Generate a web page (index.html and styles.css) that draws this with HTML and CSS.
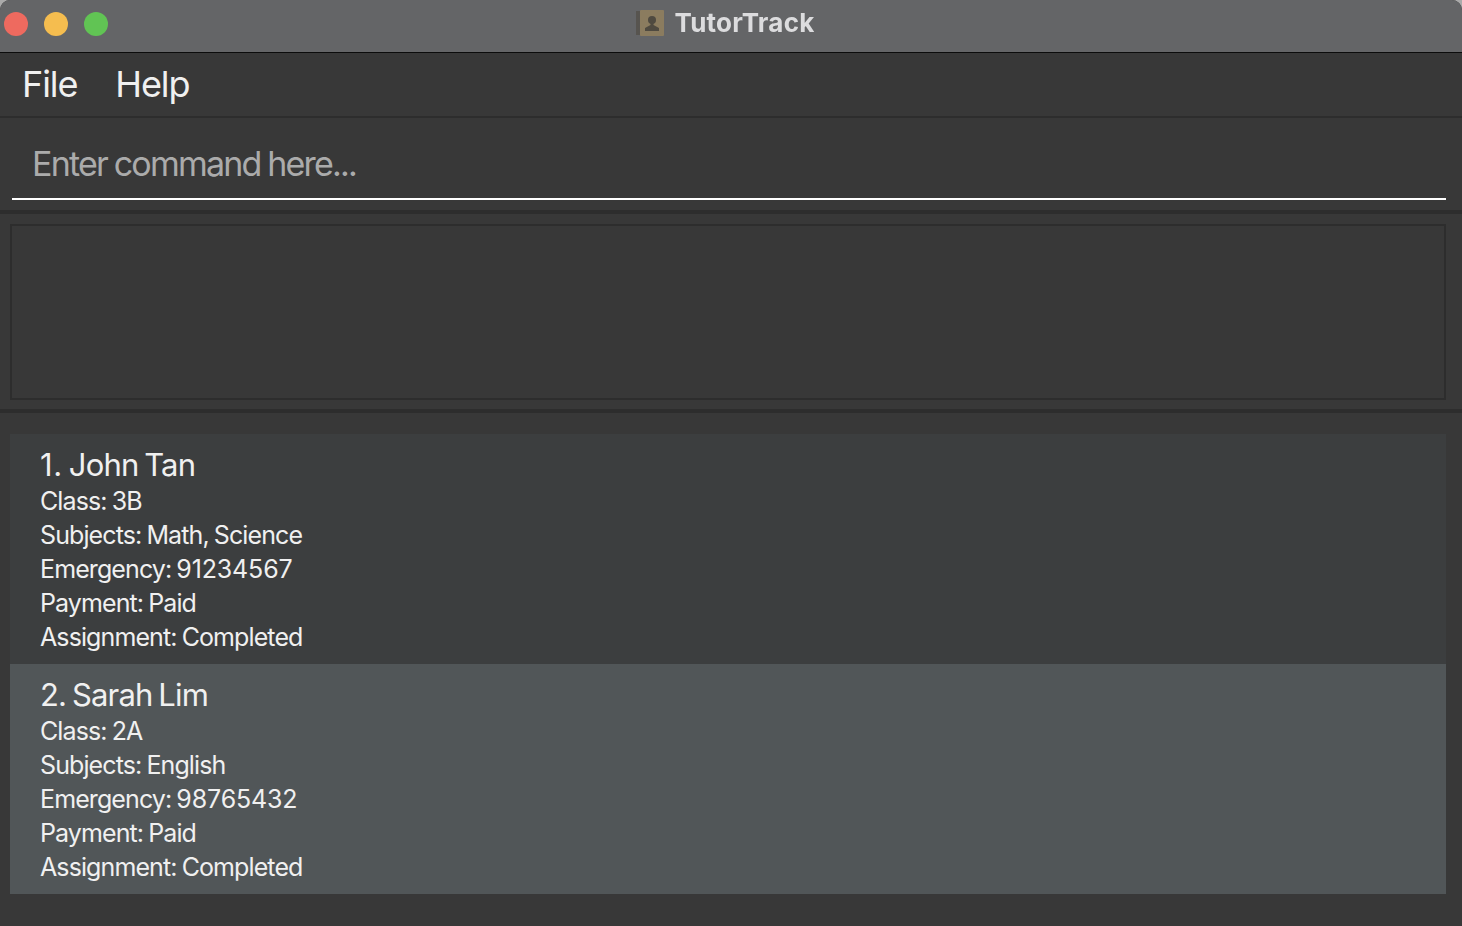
FILE: index.html
```html
<!DOCTYPE html>
<html lang="en">
<head>
    <meta charset="UTF-8">
    <title>TutorTrack</title>
    <link rel="stylesheet" href="styles.css">
</head>
<body>
    <div class="window">
        <!-- Title bar -->
        <div class="titlebar">
            <div class="lights">
                <span class="light red"></span>
                <span class="light yellow"></span>
                <span class="light green"></span>
            </div>
            <div class="title">
                <svg class="app-icon" width="28" height="26" viewBox="0 0 28 26">
                    <rect x="0" y="1" width="6" height="24" fill="#57544f"/>
                    <rect x="4" y="0" width="24" height="26" rx="1" fill="#8b7c5f"/>
                    <circle cx="16" cy="10" r="4" fill="#4f4a40"/>
                    <path d="M14.5 13 L17.5 13 L17.5 15 L23 18 L23 21 L9 21 L9 18 L14.5 15 Z" fill="#4f4a40"/>
                </svg>
                <span>TutorTrack</span>
            </div>
        </div>

        <!-- Menu -->
        <div class="menubar">
            <span class="menu-item">File</span>
            <span class="menu-item">Help</span>
        </div>

        <!-- Command box -->
        <div class="command-pane">
            <div class="command-box">Enter command here...</div>
        </div>

        <!-- Result display -->
        <div class="result-pane">
            <div class="result-box"></div>
        </div>

        <!-- Student list -->
        <div class="list-pane">
            <div class="card">
                <div class="card-name"><span class="index-one">1.</span> John Tan</div>
                <div class="card-line">Class: 3B</div>
                <div class="card-line">Subjects: Math, Science</div>
                <div class="card-line">Emergency: <span class="digits">91234567</span></div>
                <div class="card-line">Payment: Paid</div>
                <div class="card-line">Assignment: Completed</div>
            </div>
            <div class="card card-alt">
                <div class="card-name">2. Sarah Lim</div>
                <div class="card-line">Class: 2A</div>
                <div class="card-line">Subjects: English</div>
                <div class="card-line">Emergency: <span class="digits">98765432</span></div>
                <div class="card-line">Payment: Paid</div>
                <div class="card-line">Assignment: Completed</div>
            </div>
        </div>
    </div>
</body>
</html>
```

FILE: styles.css
```css
html, body {
    margin: 0;
    padding: 0;
    background-color: #aaaaaa;
}
body {
    font-family: "Inter", "Liberation Sans", sans-serif;
    color: #ffffff;
}
.window {
    width: 1462px;
    height: 926px;
    overflow: hidden;
    background-color: #383838;
    border-radius: 10px 10px 0 0;
}
.titlebar {
    height: 52px;
    border-bottom: 1px solid #0c0c0c;
    background-color: #646567;
    display: flex;
    align-items: center;
    justify-content: center;
    position: relative;
}
.lights {
    position: absolute;
    left: 4px;
    top: 12px;
    display: flex;
    gap: 16px;
}
.light {
    width: 24px;
    height: 24px;
    border-radius: 50%;
}
.red { background-color: #ee6a5f; }
.yellow { background-color: #f5bd4f; }
.green { background-color: #61c454; }
.title {
    display: flex;
    align-items: center;
    gap: 10px;
    font-size: 26px;
    font-weight: 700;
    letter-spacing: 0.25px;
    color: #dcdcde;
    margin-right: 11px;
    margin-top: -7px;
    filter: blur(0.4px);
}
.app-icon {
    display: block;
}
.menubar {
    height: 61px;
    padding-bottom: 2px;
    border-bottom: 2px solid #2d2d2d;
    display: flex;
    align-items: center;
    padding-left: 22px;
    gap: 38px;
    font-size: 36px;
    letter-spacing: -1.1px;
    color: #f0f0f0;
}
.command-pane {
    height: 92px;
    border-bottom: 4px solid #2d2d2d;
    padding: 0 16px 0 12px;
}
.command-box {
    height: 80px;
    box-sizing: content-box;
    border-bottom: 2px solid #ffffff;
    padding-left: 20px;
    line-height: 92px;
    font-size: 34px;
    letter-spacing: -1.8px;
    word-spacing: -1px;
    color: #ababab;
}
.result-pane {
    height: 185px;
    border-bottom: 4px solid #2d2d2d;
    padding: 10px 16px 0 10px;
}
.result-box {
    height: 172px;
    border: 2px solid #2d2d2d;
}
.list-pane {
    padding: 21px 16px 0 10px;
}
.card {
    height: 230px;
    box-sizing: border-box;
    padding: 13px 0 0 30px;
    background-color: #3c3e3f;
    color: #f0f0f0;
}
.card-alt {
    background-color: #515658;
}
.card-name {
    font-size: 31px;
    line-height: 36px;
    letter-spacing: -0.85px;
    word-spacing: -2px;
    margin-bottom: 1px;
}
.index-one {
    letter-spacing: 0.7px;
}
.card-line {
    font-size: 25px;
    line-height: 34px;
    letter-spacing: -0.9px;
    word-spacing: -1px;
}
.digits {
    letter-spacing: -0.15px;
}
```
